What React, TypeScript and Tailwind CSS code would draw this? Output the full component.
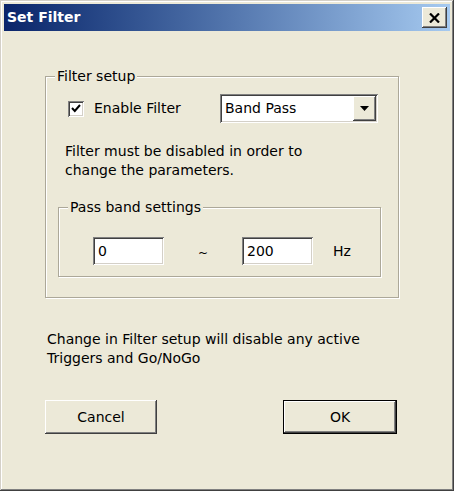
const raised =
  'shadow-[inset_-1px_-1px_#404040,inset_1px_1px_#ffffff,inset_-2px_-2px_#808080,inset_2px_2px_#ece9d8]';
const sunken =
  'shadow-[inset_1px_1px_#808080,inset_-1px_-1px_#ffffff,inset_2px_2px_#404040,inset_-2px_-2px_#d4d0c8]';
const etched = 'border border-[#aca899] shadow-[inset_1px_1px_#ffffff,1px_1px_#ffffff]';

function GroupLabel({ children }: { children: string }) {
  return (
    <span className="absolute left-[9px] top-[-10px] bg-[#ece9d8] px-[2px] leading-[19px]">
      {children}
    </span>
  );
}

export default function App() {
  return (
    <div
      className="flex h-[491px] w-[454px] flex-col bg-[#ece9d8] p-[4px] text-[14px] text-black shadow-[inset_-1px_-1px_#404040,inset_1px_1px_#d4d0c8,inset_-2px_-2px_#808080,inset_2px_2px_#ffffff]"
      style={{ fontFamily: '"DejaVu Sans", Verdana, sans-serif' }}
    >
      {/* title bar */}
      <div className="flex h-[27px] shrink-0 items-center justify-between bg-gradient-to-r from-[#0a246a] to-[#a6caf0] pl-[3px] pr-[3px]">
        <span className="text-[14px] font-bold text-white">Set Filter</span>
        <button className={`flex h-[21px] w-[25px] items-center justify-center bg-[#ece9d8] ${raised}`}>
          <svg width="11" height="10" viewBox="0 0 11 10">
            <path d="M1 0.5 L10 9.5 M10 0.5 L1 9.5" stroke="black" strokeWidth="2.2" />
          </svg>
        </button>
      </div>

      {/* Filter setup group */}
      <div className={`relative ml-[41px] mt-[45px] h-[222px] w-[354px] ${etched}`}>
        <GroupLabel>Filter setup</GroupLabel>

        <div className="flex items-center pt-[17px]">
          <label className="ml-[22px] flex w-[152px] items-center gap-[10px]">
            <span className={`flex h-[16px] w-[16px] items-center justify-center bg-white ${sunken}`}>
              <svg width="10" height="9" viewBox="0 0 10 9">
                <path d="M1 4 L3.8 7 L9 1" fill="none" stroke="black" strokeWidth="2" />
              </svg>
            </span>
            <span>Enable Filter</span>
          </label>
          <div className={`flex h-[29px] w-[158px] items-center justify-between bg-white p-[2px] ${sunken}`}>
            <span className="pl-[3px]">Band Pass</span>
            <span className={`flex h-[25px] w-[23px] items-center justify-center bg-[#ece9d8] ${raised}`}>
              <svg width="9" height="5" viewBox="0 0 9 5">
                <path d="M0 0 H9 L4.5 5 Z" fill="black" />
              </svg>
            </span>
          </div>
        </div>

        <p className="mt-[19px] pl-[19px] leading-[19px]">
          Filter must be disabled in order to
          <br />
          change the parameters.
        </p>

        {/* Pass band group */}
        <div className={`relative ml-[12px] mt-[27px] h-[70px] w-[323px] ${etched}`}>
          <GroupLabel>Pass band settings</GroupLabel>
          <div className="flex items-center pl-[34px] pt-[29px]">
            <div className={`flex h-[28px] w-[71px] items-center bg-white pl-[5px] ${sunken}`}>0</div>
            <span className="w-[78px] pt-[4px] text-center text-[12px]">~</span>
            <div className={`flex h-[28px] w-[71px] items-center bg-white pl-[5px] ${sunken}`}>200</div>
            <span className="ml-[20px]">Hz</span>
          </div>
        </div>
      </div>

      <p className="ml-[43px] mt-[32px] leading-[19px]">
        Change in Filter setup will disable any active
        <br />
        Triggers and Go/NoGo
      </p>

      <div className="ml-[41px] mt-[32px] flex gap-[126px]">
        <button className={`h-[34px] w-[112px] bg-[#ece9d8] ${raised}`}>Cancel</button>
        <button className="h-[34px] w-[114px] border border-black">
          <span className={`flex h-full w-full items-center justify-center bg-[#ece9d8] ${raised}`}>OK</span>
        </button>
      </div>
    </div>
  );
}
